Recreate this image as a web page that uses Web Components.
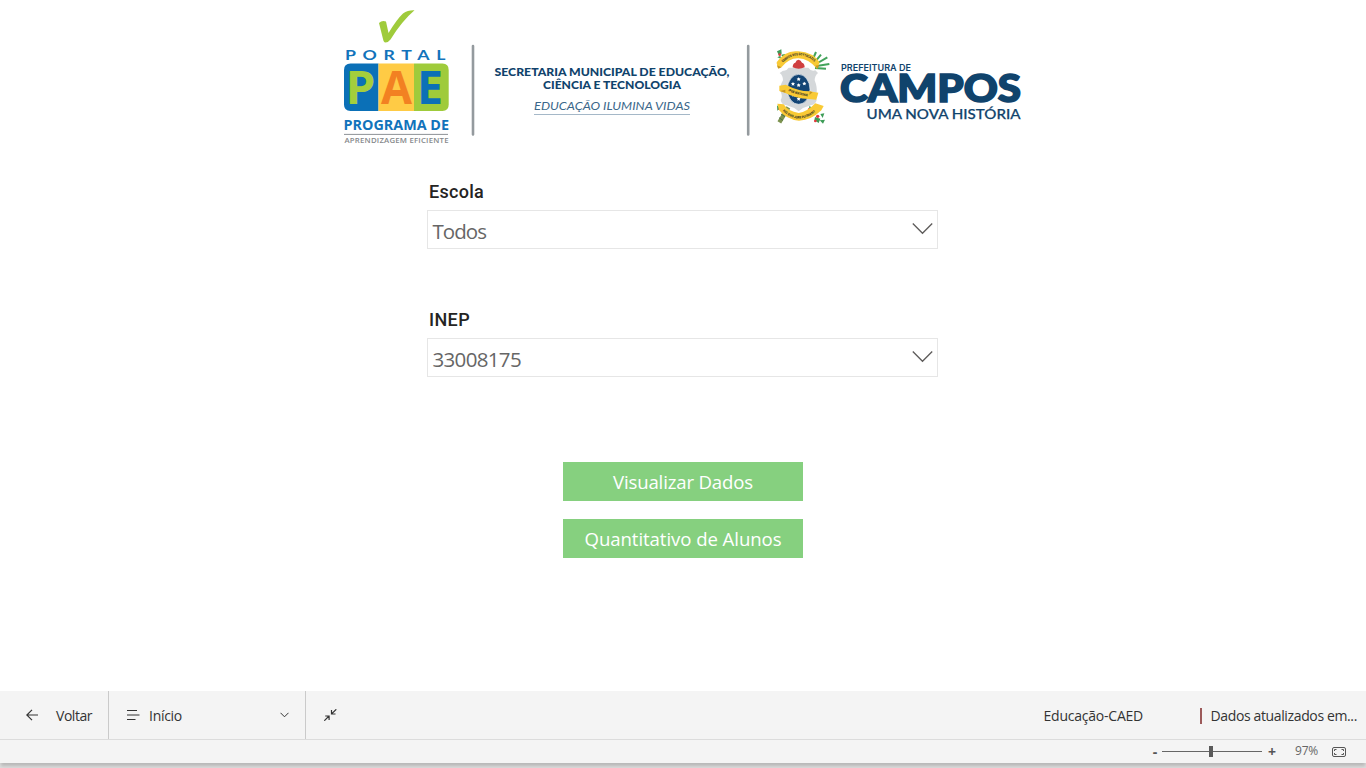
<!DOCTYPE html>
<html lang="pt-BR">
<head>
<meta charset="utf-8">
<title>Portal PAE</title>
<style>
html,body{margin:0;height:100%;overflow:hidden;background:#fff}
body{font-family:"Open Sans","Noto Sans",sans-serif}
</style>
</head>
<body>
<pae-app></pae-app>
<script>
function define(name, html, init){
  const t=document.createElement('template');
  t.innerHTML=html;
  customElements.define(name, class extends HTMLElement{
    constructor(){super();this.attachShadow({mode:'open'}).append(t.content.cloneNode(true));}
    connectedCallback(){if(init)init(this,this.shadowRoot);}
  });
}

/* Tracks its text so that it fills the given width */
define('fit-text','<style>:host{display:inline-block;white-space:nowrap;line-height:20px}span{display:inline-block}</style><span><slot></slot></span>',(el,root)=>{
  const s=root.querySelector('span'), w=+el.getAttribute('width'), n=el.textContent.length;
  s.style.letterSpacing=((w-s.getBoundingClientRect().width)/n)+'px';
});

define('portal-header',`<style>
:host{display:flex;justify-content:center;height:150px}
svg{display:block;width:1366px;height:150px}
text{font-family:Inter,"Open Sans",sans-serif;fill:#10436c}
</style>
<svg viewBox="0 0 1366 150">
 <path d="M379 23Q382 20 386 21.500L388.500 33Q397 19 403 13.500Q408 10 414.500 10.300Q402 21 390.500 39.500Q388 43 384.500 42.300Q383.500 42 383 39Z" fill="#9fcb3b"/>
 <text x="345" y="59.600" font-size="13.300" font-weight="700" letter-spacing="5" textLength="107" lengthAdjust="spacingAndGlyphs" style="fill:#1273bb;font-family:Lato">PORTAL</text>
 <path d="M350.500 63.500H378.500V111H350.500Q344 111 344 104.500V70Q344 63.500 350.500 63.500Z" fill="#0b70b7"/>
 <path d="M378.500 63.500H414V111H378.500Z" fill="#ffcb45"/>
 <path d="M414 63.500H442.500Q448.700 63.500 448.700 70V104.500Q448.700 111 442.500 111H414Z" fill="#9fcb3b"/>
 <g font-weight="700" font-size="46">
 <text x="345.500" y="104.200" textLength="30" lengthAdjust="spacingAndGlyphs" style="fill:#a4ce3c;font-family:'Open Sans'">P</text>
 <text x="381" y="104.200" textLength="31" lengthAdjust="spacingAndGlyphs" style="fill:#f28122;font-family:'Open Sans'">A</text>
 <text x="417" y="104.200" textLength="26" lengthAdjust="spacingAndGlyphs" style="fill:#0b70b7;font-family:'Open Sans'">E</text></g>
 <text x="343.500" y="129.800" font-size="14" font-weight="700" textLength="105.500" lengthAdjust="spacingAndGlyphs" style="fill:#1273bb;font-family:'Open Sans'">PROGRAMA DE</text>
 <path d="M344 134.400H448" stroke="#8d9296" stroke-width="1"/>
 <text x="344.500" y="143.200" font-size="7.800" font-weight="600" textLength="104" style="fill:#85888b;font-family:'Open Sans'">APRENDIZAGEM EFICIENTE</text>
 <path d="M473 46V134.500M748.200 46V134.500" stroke="#949a9e" stroke-width="2.600" stroke-linecap="round"/>
 <text x="494.500" y="75.700" font-size="11.200" font-weight="900" textLength="235" lengthAdjust="spacingAndGlyphs" style="font-family:Lato">SECRETARIA MUNICIPAL DE EDUCAÇÃO,</text>
 <text x="543" y="88.700" font-size="11.200" font-weight="900" textLength="138" lengthAdjust="spacingAndGlyphs" style="font-family:Lato">CIÊNCIA E TECNOLOGIA</text>
 <text x="534" y="109.800" font-size="11.300" font-style="italic" textLength="156" lengthAdjust="spacingAndGlyphs" style="fill:#3b678a;font-family:Lato">EDUCAÇÃO ILUMINA VIDAS</text>
 <path d="M534 114.500H690" stroke="#a5b8c8"/>
 <text x="841" y="70.500" font-size="9" font-weight="600" textLength="70" lengthAdjust="spacingAndGlyphs">PREFEITURA DE</text>
 <text x="840" y="102" font-size="37" font-weight="900" textLength="181" lengthAdjust="spacingAndGlyphs" stroke="#10436c" stroke-width="1.600" style="font-family:Lato">CAMPOS</text>
 <text x="866.500" y="119.400" font-size="14.200" font-weight="500" textLength="154" lengthAdjust="spacingAndGlyphs" stroke="#10436c" stroke-width=".25" style="font-family:Lato">UMA NOVA HISTÓRIA</text>
 <g transform="translate(765 40) scale(.33333)">
  <g fill="none" stroke="#43a35b" stroke-width="6"><path d="M140 66L153 36M148 68L168 44M153 72L187 52M155 78L193 72M150 84L183 86"/></g>
  <g fill="#3d9c57"><path d="M36 34l13-6 1 13-9 4zM48 44l13-2-5 12zM37 52l9-5 3 10zM36 196l10 9-9 7zM134 196l9 16-13 3zM130 216l17 2-8 12zM150 231l16 5-5 13-13-8zM166 222l12-2-5 14zM164 241l16-2-6 12z"/></g>
  <g fill="#e2383d"><circle cx="44" cy="44" r="4"/><circle cx="40" cy="70" r="4"/><circle cx="133" cy="208" r="4"/><circle cx="158" cy="229" r="5"/><circle cx="151" cy="243" r="4"/><circle cx="43" cy="207" r="3"/></g>
  <path d="M70 202L43 247" stroke="#7c924f" stroke-width="13"/><path d="M48 222l12 8M42 233l12 8" stroke="#4b7445" stroke-width="3"/>
  <path d="M54 92Q64 94 71 83H130Q139 96 151 91L159 99Q149 108 149 121Q157 141 155 158Q149 171 155 181Q151 195 137 196Q116 201 101 214Q86 201 65 196Q49 194 47 180Q54 169 47 155Q43 139 54 121Q54 106 44 99Z" fill="#d5d8da"/>
  <path d="M83 82Q83 70 91 68Q94 59 101 59Q108 60 111 68Q119 70 119 82Q101 90 83 82Z" fill="#cf3f40"/>
  <ellipse cx="101" cy="148" rx="34" ry="45" fill="#134575" stroke="#f3f5f6" stroke-width="2"/>
  <g fill="#fff"><path id="s" d="M101 112l2 3 4 1-3 3 1 4-4-2-4 2 1-4-3-3 4-1z"/><use href="#s" x="-17" y="14"/><use href="#s" x="17" y="13"/><use href="#s" y="18"/><use href="#s" x="-15" y="47"/><use href="#s" x="14" y="48"/><use href="#s" y="59"/></g>
  <path d="M35 67Q61 29 100 34Q144 37 164 67L156 86Q130 56 101 55Q73 53 50 81L38 83Z" fill="#f9ca35"/><path d="M36 76l14 6-10 4zM151 77l12-2-6 12z" fill="#c99821"/>
  <path d="M43 137L62 134Q99 153 134 154L160 158 154 179 132 177Q91 175 61 159L43 153Z" fill="#f9ca35"/><path d="M45 153l16 5v-9zM134 154l9 3-10 8z" fill="#c99821"/>
  <path d="M37 191L56 193Q70 215 101 219Q126 216 151 190L176 198 169 211Q139 241 102 242Q63 238 42 210Z" fill="#f9ca35"/>
  <path id="ra" d="M53 68Q101 24 150 67" fill="none"/><path id="rb" d="M70 153Q98 166 132 169" fill="none"/><path id="rc" d="M53 213Q101 259 157 211" fill="none"/>
  <g font-size="10" font-weight="800"><text style="fill:#3d3925"><textPath href="#ra" textLength="106" lengthAdjust="spacingAndGlyphs">CAMPOS DOS GOYTACAZES</textPath></text><text style="fill:#3d3925"><textPath href="#rb" textLength="61" lengthAdjust="spacingAndGlyphs">IPSÆ MATRONÆ</textPath></text><text style="fill:#3d3925"><textPath href="#rc" textLength="110" lengthAdjust="spacingAndGlyphs">HIC SUO JURE PUGNANT</textPath></text></g>
 </g>
</svg>`);

define('filter-select',`<style>
:host{display:block;width:511px}
.l{height:20px;padding:1px 0 8px 2px;color:#252423;font:500 18px/20px Roboto,sans-serif}
.b{box-sizing:border-box;height:39px;border:1px solid #e6e6e6;display:flex;align-items:center;justify-content:space-between;padding:2px 4.500px 0 4.500px;color:#666;font-size:20.5px}
svg{display:block;margin-bottom:4px}
</style>
<div class="l"><slot name="label"></slot></div>
<div class="b"><slot></slot><svg width="21" height="13"><path d="M.8 1.500L10.500 11.300L20.200 1.500" fill="none" stroke="#5d5b5a" stroke-width="1.300"/></svg></div>`);

define('action-button',`<style>
:host{display:flex;box-sizing:border-box;width:240px;height:39px;align-items:center;justify-content:center;background:#86d07f;color:#fff;font-size:18.600px}
</style><slot></slot>`);

define('nav-bar',`<style>
:host{display:flex;height:48px;background:#f4f4f4;border-bottom:1px solid #dcdcdc;color:#333;font-size:14px}
div{display:flex;align-items:center;box-sizing:border-box}
fit-text{margin-top:2px}
svg{display:block;fill:none;stroke:#333;stroke-width:1.200}
.a{width:109px;padding-left:26px;gap:18px;border-right:1px solid #cacaca}
.h{width:197px;padding:0 16px 0 18px;border-right:1px solid #cacaca}
.h fit-text{margin-left:9px;margin-right:auto}
.c{padding-left:18px;flex:1}
.r{padding-right:9px}
.v{width:2px;height:16px;background:#9c5a5a;margin:1px 9px 0 56.500px}
</style>
<div class="a"><svg width="12" height="12"><path d="M6 .8L.8 6L6 11.200M.8 6H12"/></svg><fit-text width="36">Voltar</fit-text></div>
<div class="h"><svg width="13" height="12"><path d="M0 1.500H10M0 6H12.500M0 10.500H8.500"/></svg><fit-text width="33">Início</fit-text><svg width="9" height="6" style="stroke-width:1"><path d="M.5 .8L4.500 4.800L8.500 .8"/></svg></div>
<div class="c"><svg width="13" height="12"><path d="M12.300 .3L7.800 4.600M7.500 1V5H11.500M.3 11.700L4.800 7.300M1.200 7H5.100V11"/></svg></div>
<div class="r"><fit-text width="99.500">Educação-CAED</fit-text><span class="v"></span><fit-text width="146.500">Dados atualizados em...</fit-text></div>`);

define('zoom-bar',`<style>
:host{display:flex;height:23px;background:#f4f4f4;align-items:center;justify-content:flex-end;padding-right:20px;color:#666;font-size:12px;box-shadow:0 4px 3px -1px rgba(0,0,0,.16)}
b{font:700 14px/18px "Open Sans",sans-serif;color:#555;width:8px;text-align:center}
.t{width:100px;height:11px;margin:0 6px 0 3px;background:linear-gradient(#666,#666) 0 5px/100% 1px no-repeat;display:flex;justify-content:center}
.t i{width:4px;height:11px;background:#5a5a5a;margin-right:3px}
fit-text{margin:-1px 14px 0 19px}
svg{display:block;margin-top:1px}
</style><b>-</b><div class="t"><i></i></div><b>+</b><fit-text width="23">97%</fit-text><svg width="14" height="10" fill="none" stroke="#555"><rect x=".5" y=".5" width="13" height="9" rx="1.500"/><path d="M2.500 4V2.500H4.500M9.500 2.500H11.500V4M11.500 6V7.500H9.500M4.500 7.500H2.500V6"/></svg>`);

define('pae-app',`<style>
:host{display:flex;flex-direction:column;height:768px;width:1366px;overflow:hidden;background:linear-gradient(#fff 700px,#dcdcdc 700px)}
main{flex:1;display:flex;flex-direction:column;align-items:center;background:#fff}
.f{display:flex;flex-direction:column;gap:60px;margin-top:31px;margin-right:1px}
.g{display:flex;flex-direction:column;gap:18px;margin-top:85px}
zoom-bar{margin-bottom:5px}
</style>
<main><portal-header></portal-header>
<div class="f"><filter-select><fit-text slot="label" width="55">Escola</fit-text><fit-text width="53.5">Todos</fit-text></filter-select>
<filter-select><fit-text slot="label" width="41">INEP</fit-text><fit-text width="88.5">33008175</fit-text></filter-select></div>
<div class="g"><action-button><fit-text width="140">Visualizar Dados</fit-text></action-button><action-button><fit-text width="197">Quantitativo de Alunos</fit-text></action-button></div>
</main><nav-bar></nav-bar><zoom-bar></zoom-bar>`);
</script>
</body>
</html>
